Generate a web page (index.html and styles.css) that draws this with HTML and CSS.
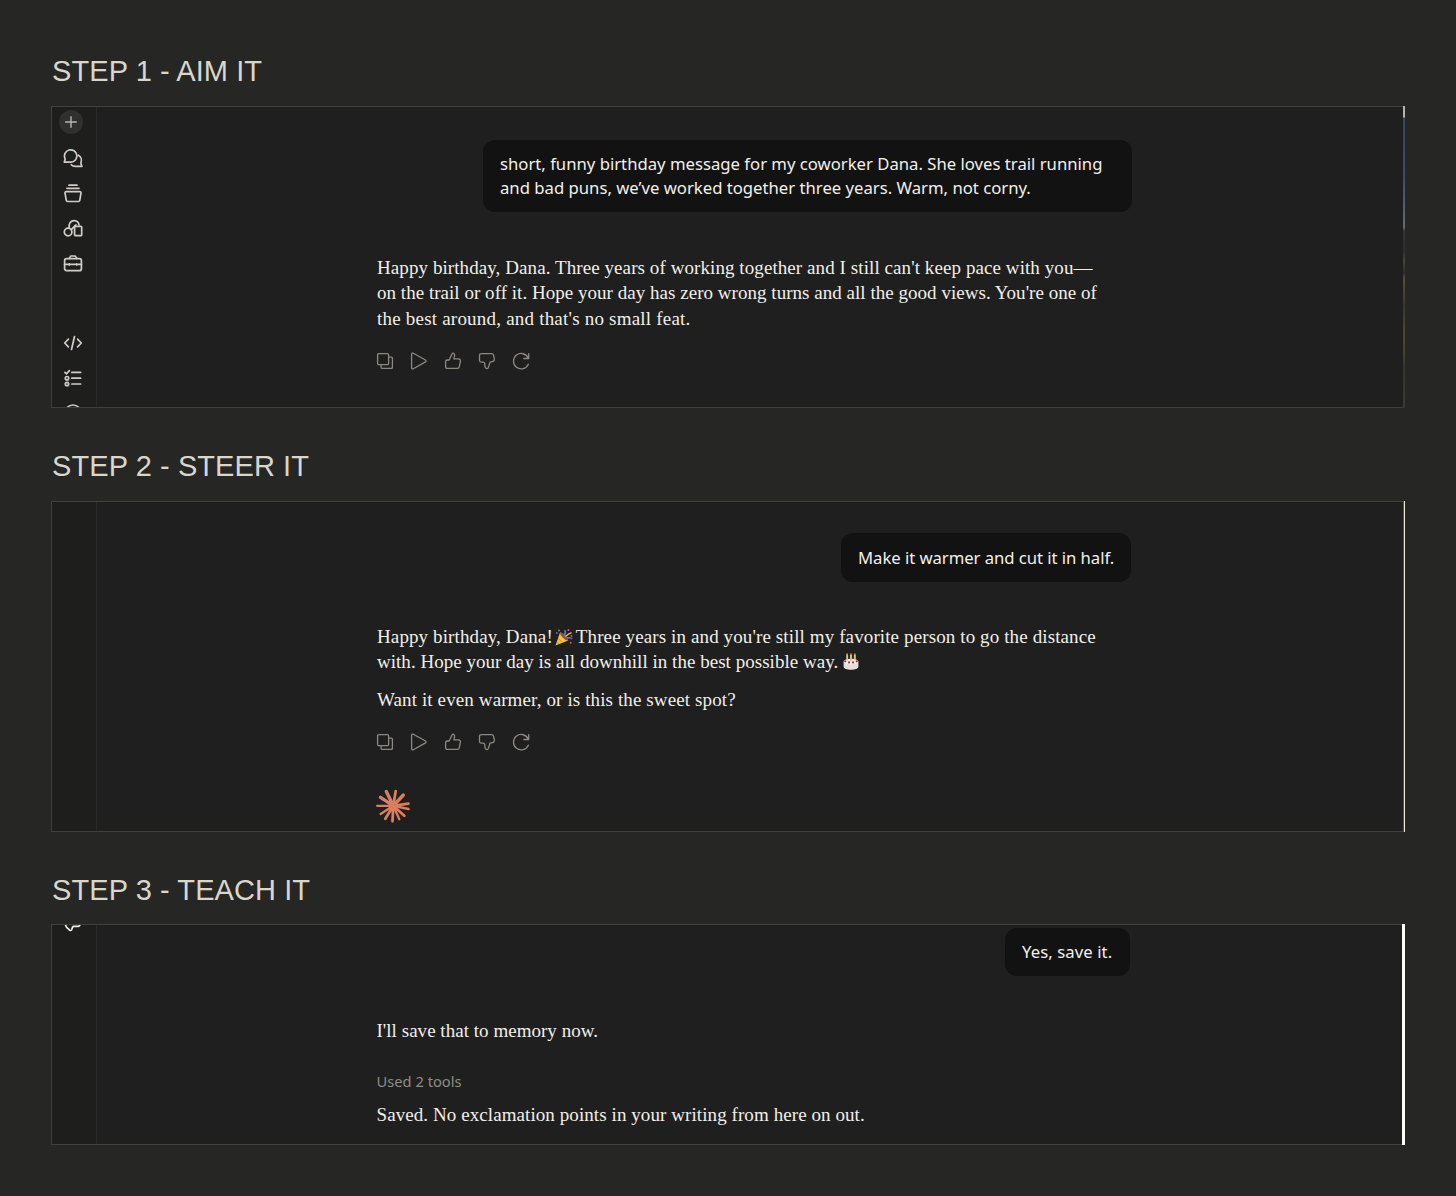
FILE: index.html
```html
<!DOCTYPE html>
<html lang="en">

<head>
    <meta charset="UTF-8">
    <meta name="viewport" content="width=device-width, initial-scale=1.0">
    <title>Aim, steer, teach</title>
    <link rel="stylesheet" href="styles.css">
</head>

<body>
    <!-- shared icons -->
    <svg class="defs" width="0" height="0">
        <symbol id="copy" viewBox="0 0 20 20">
            <rect x="2.6" y="2.6" width="11" height="11" rx="1.2" />
            <path d="M13.6 6.1h2.6a1.2 1.2 0 0 1 1.2 1.2v8.9a1.2 1.2 0 0 1-1.2 1.2H7.3a1.2 1.2 0 0 1-1.2-1.2v-2.6" />
        </symbol>
        <symbol id="play" viewBox="0 0 20 20">
            <path d="M2.6 3.2v13.6c0 1 .9 1.4 1.7 1l12.2-6.9c.8-.5.8-1.4 0-1.9L4.3 2.2c-.8-.4-1.7 0-1.7 1Z" />
        </symbol>
        <symbol id="up" viewBox="0 0 20 20">
            <path d="M6.2 9 9 2.9c.3-.7 1-.9 1.6-.6.8.4 1.2 1.2 1 2.1L10.9 7.9h4.7c1.3 0 2.1 1.1 1.8 2.3l-1.1 5.5c-.2 1-1 1.7-2 1.7H4.3c-1 0-1.7-.7-1.7-1.7v-5c0-1 .7-1.7 1.7-1.7Z" />
        </symbol>
        <symbol id="down" viewBox="0 0 20 20">
            <path d="M6.2 11.2H4.4c-1.2 0-1.9-.8-1.9-1.9v-5c0-1 .8-1.7 1.8-1.7h10.4c.9 0 1.6.6 1.8 1.5l.8 3.6c.3 1.3-.5 2.6-1.9 2.9l-2.4.6-1.6 5.2c-.3.9-1.1 1.3-2 1-.9-.2-1.3-1-1.4-1.8l-.3-3.1c-.1-.8-.6-1.3-1.5-1.3Z" />
        </symbol>
        <symbol id="retry" viewBox="0 0 20 20">
            <path d="M17.7 2.6v4.9h-4.9M17.3 7.2A7.7 7.7 0 1 0 17.3 13.2" />
        </symbol>
    </svg>

    <div class="step">
        <h2 class="title">STEP 1 - AIM IT</h2>
        <div class="panel panel-aim">
            <div class="rail">
                <div class="new">
                    <svg viewBox="0 0 24 24"><path d="M12 6.7v10.6M6.7 12h10.6" /></svg>
                </div>
                <svg viewBox="0 0 20 20">
                    <path d="M1.3 14.2h6.5a6.2 6.2 0 1 0-5.8-3.7c.2.5.1 1-.1 1.5Z" />
                    <path d="M15.4 7.2c2.500 1.400 3.700 4.400 2.600 7.200-.2.5-.2.9 0 1.400l.9 2.600h-6.300c-2 0-3.400-.6-4.300-1.700" />
                </svg>
                <svg viewBox="0 0 20 20">
                    <path d="M6 2.200h8M4 5.300h12M3.200 8.600h13.600c.8 0 1.300.6 1.200 1.300l-1.200 7.300c-.1.8-.7 1.300-1.500 1.300H4.700c-.8 0-1.400-.5-1.500-1.300L2 9.900c-.1-.7.4-1.300 1.200-1.300Z" />
                </svg>
                <svg viewBox="0 0 20 20">
                    <circle cx="5.1" cy="14" r="3.8" />
                    <rect x="11.6" y="8.3" width="7.1" height="9.4" rx="1" />
                    <path d="M6.3 9.9C5.3 5.5 8 2.3 11.4 2.6c2.6.2 4.3 2 4.6 4.2M8.3 11.6l4.6-4.7" />
                </svg>
                <svg viewBox="0 0 20 20">
                    <rect x="1.6" y="5.7" width="16.8" height="12" rx="2" />
                    <path d="M6.3 5.5 7.1 3.8c.2-.6.6-.8 1.2-.8h3.4c.6 0 1 .2 1.2.8l.8 1.7M1.6 11.4h16.8M6.3 10.8v1.2M13.7 10.8v1.2" />
                </svg>
                <svg class="code" viewBox="0 0 20 20">
                    <path d="M5.4 6.2 1.7 10l3.7 3.8M14.6 6.2l3.7 3.8-3.7 3.8M11.5 3.5l-3 13" />
                </svg>
                <svg viewBox="0 0 20 20">
                    <path d="m1.9 4.4 1.6 1.4 2.9-3.2M8.8 4.4h8.8M8.8 10.2h8.8M8.8 16h8.8" />
                    <circle cx="4" cy="10.2" r="1.7" />
                    <circle cx="4" cy="16" r="1.7" />
                </svg>
                <svg viewBox="0 0 20 20">
                    <circle cx="10" cy="10" r="8" />
                </svg>
            </div>
            <div class="chat">
                <div class="bubble">
                    <div>short, funny birthday message for my coworker Dana. She loves trail running</div>
                    <div>and bad puns, we’ve worked together three years. Warm, not corny.</div>
                </div>
                <div class="reply">
                    <div class="ls-2">Happy birthday, Dana. Three years of working together and I still can't keep pace with you—</div>
                    <div class="ls-1">on the trail or off it. Hope your day has zero wrong turns and all the good views. You're one of</div>
                    <div class="ls-4">the best around, and that's no small feat.</div>
                </div>
                <div class="actions">
                    <svg><use href="#copy" /></svg>
                    <svg><use href="#play" /></svg>
                    <svg><use href="#up" /></svg>
                    <svg><use href="#down" /></svg>
                    <svg><use href="#retry" /></svg>
                </div>
            </div>
            <div class="edge"></div>
        </div>
    </div>

    <div class="step">
        <h2 class="title">STEP 2 - STEER IT</h2>
        <div class="panel panel-steer">
            <div class="rail"></div>
            <div class="chat">
                <div class="bubble">Make it warmer and cut it in half.</div>
                <div class="reply">
                    <div class="ls-3">Happy birthday, Dana!<svg class="emoji party" viewBox="0 0 18 18">
                            <path d="M.5 17.5 5 4.5C8 5 12.5 9.5 13.3 12.5Z" fill="#f5bf42" />
                            <path d="m3.2 10.5 4.3 4M1.9 14.2l2 1.6" stroke="#d08a35" stroke-width="1" />
                            <ellipse cx="9.2" cy="8.5" rx="1.7" ry="5.3" transform="rotate(-45 9.2 8.5)" fill="#8a5236" />
                            <path d="M8.8 7.3c1.6-1.5 2-3.2 1-5.2" stroke="#4b8fd0" stroke-width="1.5" fill="none" />
                            <path d="M10.3 8.7c1.7-1.7 3.3-3.6 6.3-4" stroke="#e0b04a" stroke-width="1.6" fill="none" />
                            <path d="M11.5 10.2c2-1 3.6-.6 5.6.6" stroke="#8a62cf" stroke-width="1.5" fill="none" />
                            <g fill="#d85a52">
                                <circle cx="4" cy="2.4" r="1" />
                                <circle cx="15.7" cy="14.8" r="1" />
                            </g>
                            <g fill="#5a7fd6">
                                <circle cx="1.8" cy="5" r=".9" />
                                <circle cx="16.5" cy="8" r=".9" />
                            </g>
                            <circle cx="13.4" cy="1.9" r="1" fill="#d9527f" />
                        </svg>Three years in and you're still my favorite person to go the distance</div>
                    <div class="ls-1">with. Hope your day is all downhill in the best possible way.<svg class="emoji cake" viewBox="0 0 16 18">
                            <path d="M.6 8.5v5.2c0 1.7 3.3 3.1 7.4 3.1s7.4-1.4 7.4-3.1V8.5Z" fill="#e6e0dc" />
                            <ellipse cx="8" cy="8.5" rx="7.4" ry="2.8" fill="#f6f1ec" />
                            <g fill="#b32b3b">
                                <circle cx="2.2" cy="8.3" r="1.1" />
                                <circle cx="6" cy="9.4" r="1.1" />
                                <circle cx="10" cy="9.4" r="1.1" />
                                <circle cx="13.8" cy="8.3" r="1.1" />
                            </g>
                            <path d="M4.2 2v5.5M8 2v6M11.8 2v5.5" stroke="#dcc690" stroke-width="1.9" />
                            <path d="M4.2.5v2M8 .5v2M11.8.5v2" stroke="#f0b14a" stroke-width="1.4" />
                        </svg></div>
                    <div class="question ls-3">Want it even warmer, or is this the sweet spot?</div>
                </div>
                <div class="actions">
                    <svg><use href="#copy" /></svg>
                    <svg><use href="#play" /></svg>
                    <svg><use href="#up" /></svg>
                    <svg><use href="#down" /></svg>
                    <svg><use href="#retry" /></svg>
                </div>
                <svg class="burst" viewBox="0 0 34 34">
                    <circle cx="17.3" cy="16.8" r="4" />
                    <path d="M17.3 16.8 10.3 2.5M17.3 16.8 27.3 6M17.3 16.8 4.5 8.4" stroke-width="3.4" />
                    <path d="M17.3 16.8 19.7 2.2M17.3 16.8 32.4 14.6M17.3 16.8 28.3 26.8M17.3 16.8 16.5 32.3M17.3 16.8 9.3 29.8" stroke-width="2.8" />
                    <path d="M17.3 16.8 32.6 20M17.3 16.8 23.3 30.2M17.3 16.8 4.6 25M17.3 16.8 1.2 16.8" stroke-width="2.3" />
                </svg>
            </div>
            <div class="edge"></div>
        </div>
    </div>

    <div class="step">
        <h2 class="title">STEP 3 - TEACH IT</h2>
        <div class="panel panel-teach">
            <div class="rail">
                <svg class="cut" viewBox="0 0 20 7">
                    <path d="M2.3-1c.3 2.5 1.4 4.2 3.6 5.2.5 1.7 2.7 1.7 3 0 .2-1.6.6-2.7 2-2.9h4.4c1 0 1.6-.7 1.6-1.8" />
                </svg>
            </div>
            <div class="chat">
                <div class="bubble">Yes, save it.</div>
                <div class="reply ls-1">I'll save that to memory now.</div>
                <div class="tools">Used 2 tools</div>
                <div class="reply after ls-2">Saved. No exclamation points in your writing from here on out.</div>
            </div>
            <div class="edge"></div>
        </div>
    </div>
</body>

</html>
```
FILE: styles.css
```css
* {
    margin: 0;
    padding: 0;
    box-sizing: border-box;
}

body {
    height: 1196px;
    padding: 54px 51px 0;
    background-color: #262624;
    font-family: "Noto Sans", sans-serif;
    overflow: hidden;
}

.defs {
    display: none;
}

.step {
    margin-bottom: 41px;
}

.step:nth-of-type(3) .title {
    margin-bottom: 17px;
}

.title {
    height: 34px;
    margin-bottom: 18px;
    padding-left: 1px;
    font: 29px/34px "Liberation Sans", sans-serif;
    letter-spacing: 0.08px;
    color: #d9d6cc;
}

.panel {
    display: flex;
    border: 1px solid #41413c;
    border-right: 0;
    background-color: #1f1f1f;
}

.panel-aim {
    height: 302px;
}

.panel-steer {
    height: 331px;
}

.panel-teach {
    height: 221px;
}

/* left icon rail */
.rail {
    display: flex;
    flex-direction: column;
    gap: 15px;
    width: 45px;
    padding: 3px 0 0 10.5px;
    border-right: 1px solid #2a2a29;
    background-color: #1e1e1d;
    overflow: hidden;
}

.rail svg {
    flex: none;
    width: 20px;
    height: 20px;
    fill: none;
    stroke: #cfcdc6;
    stroke-width: 1.7;
    stroke-linecap: round;
    stroke-linejoin: round;
}

.rail .new {
    flex: none;
    width: 24px;
    height: 24px;
    margin: 0 0 -1.5px -4px;
    border-radius: 50%;
    background-color: #30302e;
}

.rail .new svg {
    display: block;
    width: 24px;
    height: 24px;
    stroke: #b9b7b0;
    stroke-width: 1.4;
}

.rail .code {
    margin-top: 45.5px;
}

.panel-teach .rail {
    padding-top: 0;
}

.rail .cut {
    height: 7px;
    stroke: #f0eee8;
}

/* conversation */
.chat {
    flex: 1;
    display: flex;
    flex-direction: column;
    padding: 32.5px 0 0 280px;
    overflow: hidden;
}

.bubble {
    align-self: flex-start;
    width: 649px;
    margin-left: 106px;
    padding: 12px 17px;
    border-radius: 12px;
    background-color: #121212;
    font-size: 16.7px;
    line-height: 24.3px;
    white-space: nowrap;
    color: #f2f0ea;
}

.reply {
    margin-top: 42.5px;
    font: 19px/25.5px "Liberation Serif", serif;
    white-space: nowrap;
    color: #f1efe9;
}

.ls-1 {
    letter-spacing: 0.03px;
}

.ls-2 {
    letter-spacing: 0.08px;
}

.ls-3 {
    letter-spacing: 0.115px;
}

.ls-4 {
    letter-spacing: 0.21px;
}

.actions {
    display: flex;
    gap: 14px;
    margin: 19.5px 0 0 -2px;
}

.actions svg {
    width: 20px;
    height: 20px;
    fill: none;
    stroke: #8b8982;
    stroke-width: 1.3;
    stroke-linecap: round;
    stroke-linejoin: round;
}

.panel-steer .chat {
    padding-top: 31px;
}

.panel-steer .bubble {
    width: 290px;
    margin-left: 464px;
    line-height: 25px;
    letter-spacing: -0.05px;
}

.panel-steer .reply {
    margin-top: 41.8px;
}

.emoji {
    height: 18px;
    vertical-align: -3px;
}

.party {
    width: 18px;
    margin: 0 3px 0 2px;
}

.cake {
    width: 16px;
    margin-left: 4.5px;
}

.question {
    margin-top: 12px;
}

.burst {
    width: 34px;
    height: 34px;
    margin: 37px 0 0 -1.5px;
    fill: #d97f5f;
    stroke: #d97f5f;
    stroke-width: 0;
    stroke-linecap: round;
}

.panel-teach .chat {
    padding: 2.5px 0 0 279.5px;
}

.panel-teach .bubble {
    width: 125px;
    margin-left: 628.5px;
    padding-bottom: 12.7px;
    letter-spacing: 0.08px;
}

.panel-teach .reply {
    margin-top: 42px;
}

.tools {
    margin-top: 27px;
    font-size: 14.7px;
    line-height: 20px;
    color: #8e8c86;
}

.panel-teach .after {
    margin-top: 11.5px;
}

/* sliver along the right side of each panel */
.edge {
    width: 2px;
    margin: -1px 0;
    background: linear-gradient(#b5b3ac 0 11px, #35455f 12px, #3d4d68 70px, #55606f 105px, #6b6a68 121px, #33343a 125px, #2b2e33 145px, #4a443a 155px, #2c2d30 167px, #57502f 172px, #3a382b 200px, #4d4828 225px, #45422a 250px, #33352f 260px, #3a3a36);
}

.panel-steer .edge {
    background: linear-gradient(90deg, #5a4d33 50%, #f1ead8 50%);
}

.panel-teach .edge {
    width: 3px;
    background: #fdfcf8;
}
```
